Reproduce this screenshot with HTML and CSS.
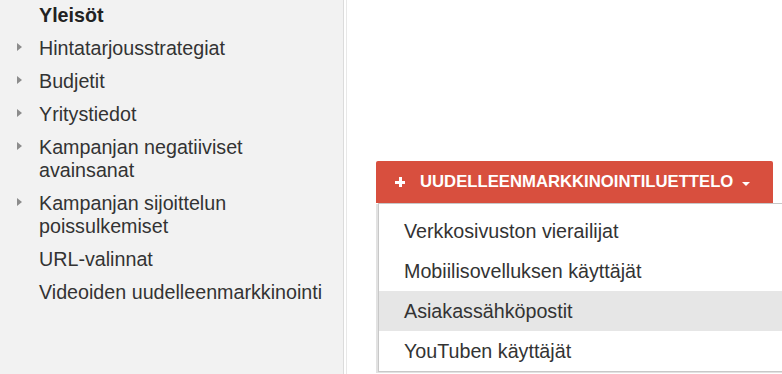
FILE: index.html
```html
<!DOCTYPE html>
<html>
<head>
<meta charset="utf-8">
<link rel="stylesheet" href="styles.css">
</head>
<body>
<div class="page">
  <nav class="sidebar">
    <ul class="nav-list">
      <li class="nav-item active">Yleisöt</li>
      <li class="nav-item has-arrow">Hintatarjousstrategiat</li>
      <li class="nav-item has-arrow">Budjetit</li>
      <li class="nav-item has-arrow">Yritystiedot</li>
      <li class="nav-item has-arrow">Kampanjan negatiiviset<br>avainsanat</li>
      <li class="nav-item has-arrow">Kampanjan sijoittelun<br>poissulkemiset</li>
      <li class="nav-item">URL-valinnat</li>
      <li class="nav-item">Videoiden uudelleenmarkkinointi</li>
    </ul>
  </nav>
  <main class="main">
    <div class="dropdown">
      <button class="add-button">
        <span class="plus"></span>
        <span class="label">UUDELLEENMARKKINOINTILUETTELO</span>
        <span class="caret"></span>
      </button>
      <ul class="menu">
        <li class="menu-item">Verkkosivuston vierailijat</li>
        <li class="menu-item">Mobiilisovelluksen käyttäjät</li>
        <li class="menu-item hover">Asiakassähköpostit</li>
        <li class="menu-item">YouTuben käyttäjät</li>
      </ul>
    </div>
  </main>
</div>
</body>
</html>
```

FILE: styles.css
```css
html, body {
  margin: 0;
  padding: 0;
  background: #ffffff;
  overflow: hidden;
}

.page {
  display: flex;
  height: 374px;
  width: 782px;
  font-family: "Liberation Sans", Arial, sans-serif;
  color: #333333;
}

.sidebar {
  width: 343px;
  flex: none;
  background: #f2f2f2;
  border-right: 1px solid #dcdcdc;
}

.nav-list {
  list-style: none;
  margin: 0;
  padding: 4px 0 0 0;
}

.nav-item {
  position: relative;
  font-size: 19.7px;
  line-height: 23px;
  padding-left: 39px;
  margin-bottom: 10px;
  color: #333333;
}

.nav-item.active {
  font-weight: bold;
  color: #222222;
}

.nav-item.has-arrow::before {
  content: "";
  position: absolute;
  left: 17px;
  top: 6px;
  border-left: 5px solid #8c8c8c;
  border-top: 4px solid transparent;
  border-bottom: 4px solid transparent;
}

.main {
  flex: 1;
  margin-left: 2px;
  border-left: 1px solid #e8e8e8;
  min-width: 0;
}

.dropdown {
  margin-top: 161px;
  margin-left: 29px;
}

.add-button {
  display: flex;
  align-items: center;
  width: 397px;
  height: 42px;
  padding: 0 0 0 19px;
  border: none;
  border-radius: 2px 2px 0 0;
  background: #d84f3e;
  color: #ffffff;
  font-family: "Liberation Sans", Arial, sans-serif;
  font-weight: bold;
  font-size: 16.7px;
  box-sizing: border-box;
}

.plus {
  position: relative;
  flex: none;
  width: 10px;
  height: 10px;
  margin-right: 15px;
}

.plus::before,
.plus::after {
  content: "";
  position: absolute;
  background: #ffffff;
}

.plus::before {
  left: 0;
  top: 4px;
  width: 10px;
  height: 3px;
}

.plus::after {
  left: 4px;
  top: 0;
  width: 3px;
  height: 10px;
}

.caret {
  flex: none;
  margin-left: 9px;
  margin-top: 3px;
  border-top: 4px solid #ffffff;
  border-left: 4px solid transparent;
  border-right: 4px solid transparent;
}

.menu {
  list-style: none;
  margin: 0 0 0 2px;
  padding: 7px 0 0 0;
  width: 440px;
  background: #ffffff;
  border: 1px solid #c8c8c8;
  box-shadow: -2px 1px 0 #e2e2e2;
}

.menu-item {
  height: 40px;
  line-height: 40px;
  padding-left: 25px;
  font-size: 19.7px;
  color: #333333;
}

.menu-item.hover {
  background: #e6e6e6;
}
```
